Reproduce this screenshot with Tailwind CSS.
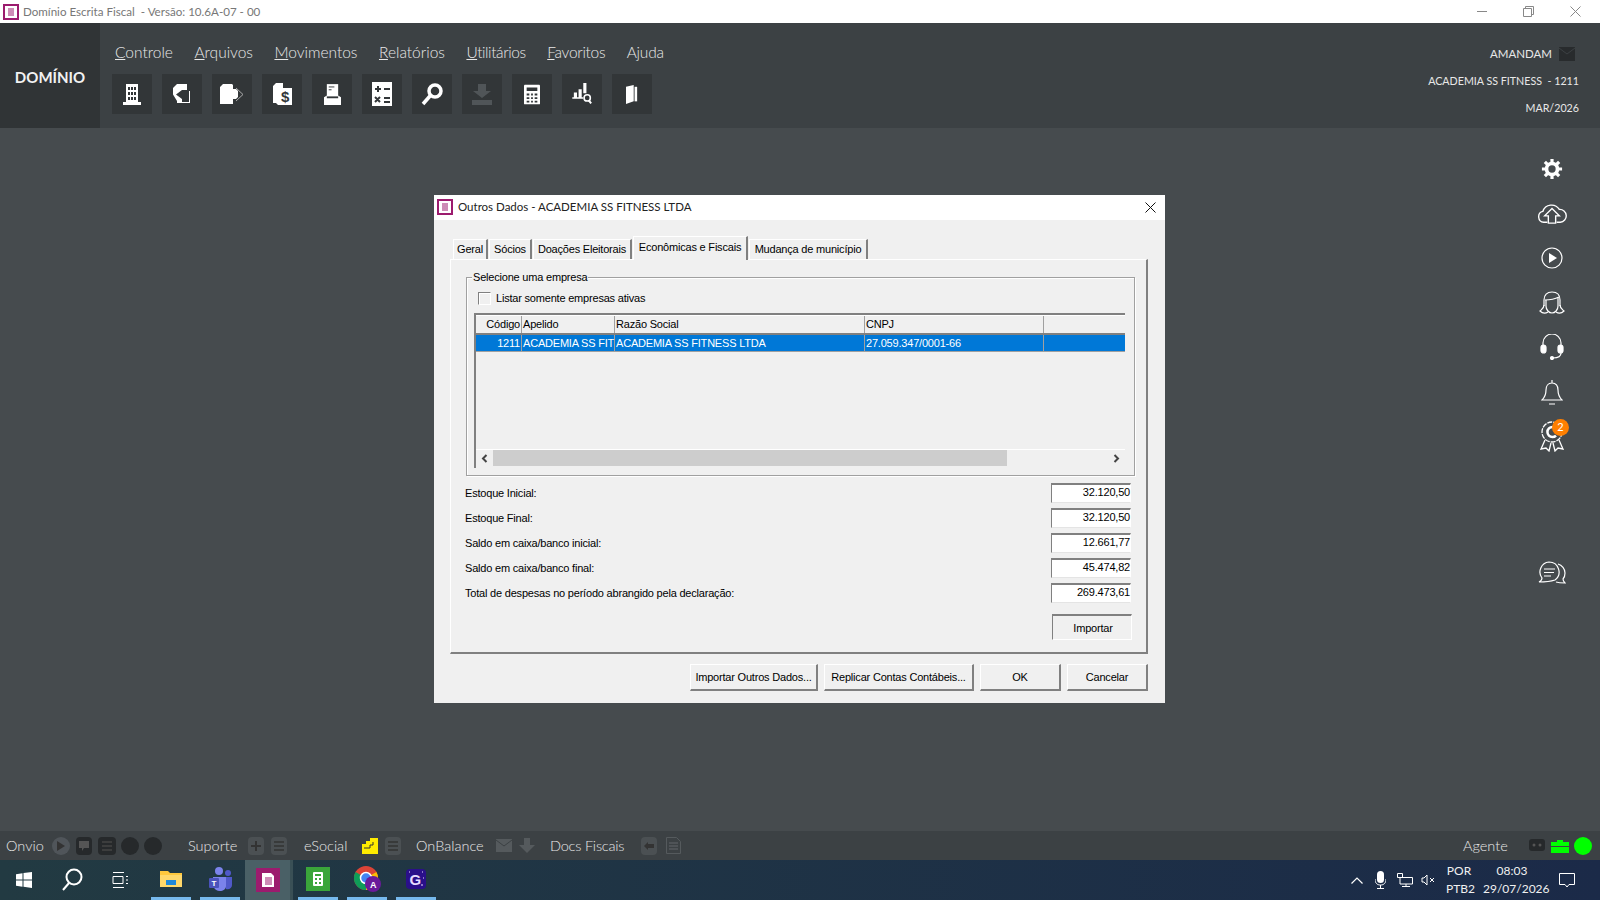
<!DOCTYPE html>
<html lang="pt-BR">
<head>
  <meta charset="UTF-8" />
  <title>Domínio Escrita Fiscal</title>
  <script src="https://cdn.jsdelivr.net/npm/@tailwindcss/browser@4"></script>
</head>
<body class="w-[1600px] h-[900px] overflow-hidden flex flex-col bg-[#464b4e] font-['Lato','Liberation_Sans',sans-serif]">

  <!-- barra de titulo -->
  <div class="h-[23px] bg-white flex items-center shrink-0 pl-[3px]">
    <svg width="16" height="16" viewBox="0 0 16 16"><rect x="1" y="1" width="14" height="14" fill="#fff" stroke="#9c1b6e" stroke-width="2"/><path d="M5 5h6M5 7h6M5 9h6M5 11h6" stroke="#9c1b6e"/></svg>
    <span class="ml-[4px] text-[11.6px] text-[#777]">Domínio Escrita Fiscal&nbsp; - Versão: 10.6A-07 - 00</span>
    <div class="ml-auto flex items-center text-[#777]">
      <svg class="mr-[35px]" width="11" height="11" viewBox="0 0 11 11"><path d="M0 5.500h10" stroke="#888"/></svg>
      <svg class="mr-[36px]" width="11" height="11" viewBox="0 0 11 11" fill="none" stroke="#888"><path d="M.5 2.500h8v8h-8zM2.500 2.500v-2h8v8h-2"/></svg>
      <svg class="mr-[19px]" width="11" height="11" viewBox="0 0 11 11"><path d="M.5.500l10 10M10.500.500l-10 10" stroke="#888"/></svg>
    </div>
  </div>

  <!-- cabecalho -->
  <header class="h-[105px] bg-[#3c4144] flex shrink-0 text-white">
    <div class="w-[100px] bg-[#303436] flex items-center justify-center pt-[3px]">
      <span class="text-[15px] font-bold text-[#f2f2f2]">DOMÍNIO</span>
    </div>
    <div class="pl-[12px] pt-[16px]">
      <nav class="h-[28px] flex items-center gap-[21.5px] pl-[3px] text-[15.5px] text-[#e8e8e8] font-light whitespace-nowrap">
        <span><u>C</u>ontrole</span><span><u>A</u>rquivos</span><span><u>M</u>ovimentos</span><span><u>R</u>elatórios</span><span class="tracking-[-0.4px]"><u>U</u>tilitários</span><span class="tracking-[-0.3px]"><u>F</u>avoritos</span><span class="tracking-[-0.2px]">Ajuda</span>
      </nav>
      <div class="mt-[7px] flex gap-[10px]">
        <div class="w-[40px] h-[40px] bg-[#323638] flex items-center justify-center"><svg width="18" height="21" viewBox="0 0 18 21" fill="#fff"><path d="M3 0h12v18h3v3H0v-3h3z"/><path d="M5 3h2v3H5zM8 3h2v3H8zM11 3h2v3h-2zM5 8h2v3H5zM8 8h2v3H8zM11 8h2v3h-2zM5 13h2v3H5zM8 13h2v3H8zM11 13h2v3h-2z" fill="#323638"/></svg></div>
        <div class="w-[40px] h-[40px] bg-[#323638] flex items-center justify-center"><svg width="18" height="21" viewBox="0 0 18 21" fill="#fff"><path d="M4 0h10v6h-5L3 10.500 9 15v3h8v1H4v-2L0 10.500V4z"/><path d="M16.500 7v12" stroke="#fff"/></svg></div>
        <div class="w-[40px] h-[40px] bg-[#323638] flex items-center justify-center"><svg width="24" height="21" viewBox="0 0 24 21" fill="#fff"><path d="M3 0h9l1 1v4h3l2 2v6l-2 2h-3v5H0V3z"/><path d="M16 4l7 6.500-7 6.500" fill="none" stroke="#aaa"/></svg></div>
        <div class="w-[40px] h-[40px] bg-[#323638] flex items-center justify-center"><svg width="20" height="22" viewBox="0 0 20 22" fill="#fff"><path d="M4 0h7v5h9v17H6l-2-2H1V3z"/><text x="9" y="19" font-size="15" font-weight="700" fill="#323638" font-family="Liberation Sans, sans-serif">$</text></svg></div>
        <div class="w-[40px] h-[40px] bg-[#323638] flex items-center justify-center"><svg width="17" height="21" viewBox="0 0 18 22" fill="#fff"><path d="M3 0h12v13H3z"/><path d="M5 3h6M5 6h3" stroke="#323638"/><path d="M0 14l3-2v3h12v-3l3 2v8H0z"/></svg></div>
        <div class="w-[40px] h-[40px] bg-[#323638] flex items-center justify-center"><svg width="20" height="24" viewBox="0 0 20 24" fill="#fff"><rect width="20" height="24"/><path d="M3 7h6M6 4v6M12 7h6M3 15l5 5M8 15l-5 5M12 16h6M12 20h6" stroke="#323638" stroke-width="2"/></svg></div>
        <div class="w-[40px] h-[40px] bg-[#323638] flex items-center justify-center"><svg width="22" height="24" viewBox="0 0 22 24" fill="none" stroke="#fff"><circle cx="14" cy="9" r="6" stroke-width="3.500"/><path d="M9 14l-7 8" stroke-width="3.500"/></svg></div>
        <div class="w-[40px] h-[40px] bg-[#323638] flex items-center justify-center"><svg width="20" height="21" viewBox="0 0 20 21" fill="#505558"><path d="M6 0h8v7h5l-9 7-9-7h5z"/><path d="M0 16h20v5H0z"/></svg></div>
        <div class="w-[40px] h-[40px] bg-[#323638] flex items-center justify-center"><svg width="16" height="21" viewBox="0 0 18 22" fill="#fff"><rect width="18" height="22" rx="1"/><path d="M3 3h12v4H3zM3 10h3v2H3zM8 10h2v2H8zM12 10h3v2h-3zM3 14h3v2H3zM8 14h2v2H8zM12 14h3v2h-3zM3 18h3v2H3zM8 18h2v2H8zM12 18h3v2h-3z" fill="#323638"/></svg></div>
        <div class="w-[40px] h-[40px] bg-[#323638] flex items-center justify-center"><svg width="21" height="22" viewBox="0 0 26 28" fill="#fff"><path d="M2 12h4v6H2zM8 8h4v10H8zM14 0h4v13h-4zM0 18h14v2H0z"/><circle cx="19" cy="19" r="4" fill="none" stroke="#fff" stroke-width="2"/><path d="M21 22l3 4" stroke="#fff" stroke-width="2.500"/></svg></div>
        <div class="w-[40px] h-[40px] bg-[#323638] flex items-center justify-center"><svg width="12" height="21" viewBox="0 0 14 22" fill="#fff"><path d="M0 2l9-2v19l-9 3z"/><path d="M10 2h3v17h-3z"/></svg></div>
      </div>
    </div>
    <div class="ml-auto pr-[21px] pt-[17px] text-[10.7px] text-[#e8e8e8] text-right leading-[27px] font-normal whitespace-nowrap">
      <div class="flex justify-end items-center h-[27px] mr-[4px] text-[11.5px]">AMANDAM<svg class="ml-[7px]" width="16" height="14" viewBox="0 0 16 14"><rect width="16" height="14" fill="#282b2d"/><path d="M0 1l8 6 8-6" fill="none" stroke="#3c4144"/></svg></div>
      <div>ACADEMIA SS FITNESS&nbsp; - 1211</div>
      <div>MAR/2026</div>
    </div>
  </header>

  <!-- area de trabalho -->
  <main class="flex-1 flex justify-between min-h-0">
    <div class="pl-[434px] pt-[67px]">

      <!-- janela Outros Dados -->
      <section class="w-[731px] h-[508px] bg-[#f0f0f0] text-black text-[11px] tracking-[-0.2px] font-['Liberation_Sans',sans-serif]">
        <div class="h-[25px] bg-white flex items-center pl-[3px] pr-[9px] pb-[1px] tracking-normal font-['Lato',sans-serif] text-[11.5px] text-[#222]">
          <svg width="16" height="16" viewBox="0 0 16 16"><rect x="1" y="1" width="14" height="14" fill="#fff" stroke="#9c1b6e" stroke-width="2"/><path d="M5 5h6M5 7h6M5 9h6M5 11h6" stroke="#9c1b6e"/></svg>
          <span class="ml-[5px]">Outros Dados - ACADEMIA SS FITNESS LTDA</span>
          <svg class="ml-auto" width="11" height="11" viewBox="0 0 11 11"><path d="M.5.500l10 10M10.500.500l-10 10" stroke="#111"/></svg>
        </div>

        <div class="pl-[16px] pr-[17px] pt-[16px]">
          <!-- abas -->
          <div class="h-[24px] flex items-end gap-[1px] pl-[3px] relative z-10 -mb-[1px]">
            <div class="w-[35px] h-[20px] mb-[1px] flex items-center justify-center bg-[#f0f0f0] border-t border-l border-white border-r-2 border-r-[#808080]">Geral</div>
            <div class="w-[43px] h-[20px] mb-[1px] flex items-center justify-center bg-[#f0f0f0] border-t border-l border-white border-r-2 border-r-[#808080]">Sócios</div>
            <div class="w-[99px] h-[20px] mb-[1px] flex items-center justify-center bg-[#f0f0f0] border-t border-l border-white border-r-2 border-r-[#808080]">Doações Eleitorais</div>
            <div class="w-[115px] h-[24px] pb-[3px] flex items-center justify-center bg-[#f0f0f0] border-t border-l border-white border-r-2 border-r-[#808080]">Econômicas e Fiscais</div>
            <div class="w-[119px] h-[20px] mb-[1px] flex items-center justify-center bg-[#f0f0f0] border-t border-l border-white border-r-2 border-r-[#808080]">Mudança de município</div>
          </div>

          <!-- painel da aba -->
          <div class="h-[395px] border-t border-l border-white border-r-2 border-b-2 border-r-[#808080] border-b-[#808080] pt-[17px] pl-[15px] pr-[11px]">
            <fieldset class="relative h-[199px] border border-[#a0a0a0] shadow-[inset_1px_1px_0_#fff,1px_1px_0_#fff] pl-[7px] pr-[9px] pt-[14px]">
              <span class="absolute left-[5px] -top-[8px] px-[1px] bg-[#f0f0f0] leading-[14px]">Selecione uma empresa</span>
              <label class="flex items-center h-[13px] ml-[4px]">
                <span class="w-[13px] h-[13px] border border-[#808080] shadow-[inset_1px_1px_0_#fff] border-r-white border-b-white"></span>
                <span class="ml-[5px]">Listar somente empresas ativas</span>
              </label>

              <!-- grade -->
              <div class="mt-[8px] h-[155px] pb-[2px] border-t-2 border-l-2 border-[#808080] flex flex-col">
                <div class="h-[20px] flex border-b-2 border-[#808080] shrink-0 border-t border-t-white">
                  <div class="w-[46px] pr-[1px] text-right border-r border-[#a0a0a0]">Código</div>
                  <div class="w-[93px] pl-[1px] border-r border-[#a0a0a0]">Apelido</div>
                  <div class="w-[250px] pl-[1px] border-r border-[#a0a0a0]">Razão Social</div>
                  <div class="w-[179px] pl-[1px] border-r border-[#a0a0a0]">CNPJ</div>
                  <div class="flex-1"></div>
                </div>
                <div class="h-[17px] flex bg-[#0078d7] text-white shrink-0 leading-[17px] border-b border-[#a0a0a0]">
                  <div class="w-[46px] pr-[1px] text-right border-r border-[#a0a0a0]">1211</div>
                  <div class="w-[93px] pl-[1px] border-r border-[#a0a0a0] whitespace-nowrap">ACADEMIA SS FIT</div>
                  <div class="w-[250px] pl-[1px] border-r border-[#a0a0a0]">ACADEMIA SS FITNESS LTDA</div>
                  <div class="w-[179px] pl-[1px] border-r border-[#a0a0a0]">27.059.347/0001-66</div>
                  <div class="flex-1"></div>
                </div>
                <div class="flex-1"></div>
                <div class="h-[17px] flex items-center border-t border-white shrink-0">
                  <div class="w-[17px] flex justify-center"><svg width="7" height="9" viewBox="0 0 7 9"><path d="M5.500 1L2 4.500 5.500 8" fill="none" stroke="#444" stroke-width="2"/></svg></div>
                  <div class="w-[514px] h-[16px] bg-[#cdcdcd]"></div>
                  <div class="flex-1"></div>
                  <div class="w-[17px] flex justify-center"><svg width="7" height="9" viewBox="0 0 7 9"><path d="M1.500 1L5 4.500 1.500 8" fill="none" stroke="#444" stroke-width="2"/></svg></div>
                </div>
              </div>
            </fieldset>

            <!-- campos -->
            <div class="mt-[7px] -ml-[1px] pr-[4px]">
              <div class="h-[20px] mb-[5px] flex items-center justify-between"><span>Estoque Inicial:</span><span class="w-[80px] h-[20px] bg-white border-t-2 border-l border-[#808080] border-r border-b border-r-white border-b-[#e4e4e4] text-right leading-[14px]">32.120,50</span></div>
              <div class="h-[20px] mb-[5px] flex items-center justify-between"><span>Estoque Final:</span><span class="w-[80px] h-[20px] bg-white border-t-2 border-l border-[#808080] border-r border-b border-r-white border-b-[#e4e4e4] text-right leading-[14px]">32.120,50</span></div>
              <div class="h-[20px] mb-[5px] flex items-center justify-between"><span>Saldo em caixa/banco inicial:</span><span class="w-[80px] h-[20px] bg-white border-t-2 border-l border-[#808080] border-r border-b border-r-white border-b-[#e4e4e4] text-right leading-[14px]">12.661,77</span></div>
              <div class="h-[20px] mb-[5px] flex items-center justify-between"><span>Saldo em caixa/banco final:</span><span class="w-[80px] h-[20px] bg-white border-t-2 border-l border-[#808080] border-r border-b border-r-white border-b-[#e4e4e4] text-right leading-[14px]">45.474,82</span></div>
              <div class="h-[20px] flex items-center justify-between"><span>Total de despesas no período abrangido pela declaração:</span><span class="w-[80px] h-[20px] bg-white border-t-2 border-l border-[#808080] border-r border-b border-r-white border-b-[#e4e4e4] text-right leading-[14px]">269.473,61</span></div>
              <div class="flex justify-end mt-[11px] -mr-[1px]">
                <button class="w-[80px] h-[26px] pl-[2px] pt-[1px] border-t-2 border-l border-[#808080] border-r border-b border-r-white border-b-white">Importar</button>
              </div>
            </div>
          </div>

          <!-- botoes -->
          <div class="mt-[10px] flex justify-end gap-[6px]">
            <button class="w-[128px] h-[27px] border-t border-l border-white border-r-2 border-b-2 border-r-[#808080] border-b-[#808080]">Importar Outros Dados...</button>
            <button class="w-[150px] h-[27px] border-t border-l border-white border-r-2 border-b-2 border-r-[#808080] border-b-[#808080]">Replicar Contas Contábeis...</button>
            <button class="w-[81px] h-[27px] border-t border-l border-white border-r-2 border-b-2 border-r-[#808080] border-b-[#808080]">OK</button>
            <button class="w-[81px] h-[27px] border-t border-l border-white border-r-2 border-b-2 border-r-[#808080] border-b-[#808080]">Cancelar</button>
          </div>
        </div>
      </section>
    </div>

    <!-- icones da direita -->
    <aside class="w-[96px] pt-[19px] flex flex-col items-center text-white">
      <div class="h-[44.5px] flex items-center"><svg width="22" height="22" viewBox="0 0 24 24" fill="none" stroke="#fff"><circle cx="12" cy="12" r="6" stroke-width="4"/><path d="M12 1v4M12 19v4M1 12h4M19 12h4M4.200 4.200l2.800 2.800M17 17l2.800 2.800M4.200 19.800L7 17M17 7l2.800-2.800" stroke-width="3.500"/></svg></div>
      <div class="h-[44.5px] flex items-center"><svg width="30" height="22" viewBox="0 0 32 24" fill="none" stroke="#fff" stroke-width="1.500"><path d="M11 21H7a6 6 0 0 1-1-11.800A10 10 0 0 1 24 7a7 7 0 0 1 1 14h-4"/><path d="M12 22v-8H8l8-8 8 8h-4v8z"/></svg></div>
      <div class="h-[44.5px] flex items-center"><svg width="22" height="22" viewBox="0 0 22 22" fill="none" stroke="#fff" stroke-width="1.200"><circle cx="11" cy="11" r="10"/><path d="M8 6l8 5-8 5z" fill="#fff" stroke="none"/></svg></div>
      <div class="h-[44.5px] flex items-center"><svg width="26" height="24" viewBox="0 0 26 24" fill="none" stroke="#fff" stroke-width="1.200"><path d="M5 15V9c0-5 3-8 8-8s8 3 8 8v6"/><path d="M6 9c5 0 10-1 14-3"/><path d="M7 9v6c0 4 3 7 6 7s6-3 6-7V6"/><path d="M5 14c0 3-2 4-4 6 2 2 5 3 8 1M21 14c0 3 2 4 4 6-2 2-5 3-8 1"/></svg></div>
      <div class="h-[44.5px] flex items-center"><svg width="24" height="26" viewBox="0 0 24 26" fill="none" stroke="#fff" stroke-width="1.200"><path d="M3 12V9a9 9 0 0 1 18 0v3"/><rect x="1" y="11" width="5" height="8" rx="2.500" fill="#fff"/><rect x="18" y="11" width="5" height="8" rx="2.500" fill="#fff"/><path d="M21 19c0 3-3 5-8 5"/><circle cx="12" cy="24" r="1.500" fill="#fff"/></svg></div>
      <div class="h-[44.5px] flex items-center"><svg width="22" height="26" viewBox="0 0 22 26" fill="none" stroke="#fff" stroke-width="1.200"><path d="M11 1v3M11 4c-4 0-6 3-6 7 0 4-1 7-4 10h20c-3-3-4-6-4-10 0-4-2-7-6-7zM8 25h6"/></svg></div>
      <div class="h-[44.5px] flex items-center relative"><svg width="26" height="32" viewBox="0 0 26 32" fill="none" stroke="#fff" stroke-width="1.300"><circle cx="13" cy="12" r="10" stroke-dasharray="5 1"/><path d="M17 8.500a5 5 0 1 0 0 7" stroke-width="2.500"/><path d="M6 20l-4 9 5-1 3 3 2-8M20 20l4 9-5-1-3 3-2-8"/></svg>
        <span class="absolute left-[13px] top-[5px] w-[17px] h-[17px] rounded-full bg-[#ff7f00] text-[11px] tracking-normal text-white flex items-center justify-center">2</span></div>
      <div class="mt-[92px] h-[44.5px] flex items-center"><svg width="28" height="24" viewBox="0 0 28 24" fill="none" stroke="#fff" stroke-width="1.200"><path d="M11 1a10 10 0 0 1 6 18c-3 1-9 2-16 2 2-1 3-2 3-4A10 10 0 0 1 11 1z"/><path d="M20 3c4 1 7 5 7 9 0 3-1 5-2 6 0 2 1 3 2 4-3 0-6 0-9-1"/><path d="M6 8h11M6 11.500h10M6 15h7"/></svg></div>
    </aside>
  </main>

  <!-- barra inferior -->
  <div class="h-[29px] bg-[#3c4144] shrink-0 flex items-center text-[14.5px] text-[#e8e8e8] font-light pl-[6px] pr-[8px] whitespace-nowrap">
    <span class="w-[37px]">Onvio</span>
    <span class="ml-[9px] w-[18px] h-[18px] rounded-full bg-[#50555a] flex items-center justify-center"><svg width="8" height="10" viewBox="0 0 8 10"><path d="M0 0l8 5-8 5z" fill="#333"/></svg></span>
    <span class="ml-[6px] w-[16px] h-[18px] rounded bg-[#26292b] flex items-center justify-center"><svg width="10" height="10" viewBox="0 0 10 10"><path d="M0 0h10v7H5L3 10V7H0z" fill="#555"/></svg></span>
    <span class="ml-[6px] w-[18px] h-[18px] rounded bg-[#26292b] flex items-center justify-center"><svg width="10" height="10" viewBox="0 0 10 10"><path d="M0 1h10M0 5h10M0 9h10" stroke="#444" stroke-width="1.500"/></svg></span>
    <span class="ml-[5px] w-[18px] h-[18px] rounded-full bg-[#26292b]"></span>
    <span class="ml-[5px] w-[18px] h-[18px] rounded-full bg-[#26292b]"></span>
    <span class="ml-[26px] w-[47px]">Suporte</span>
    <span class="ml-[13px] w-[16px] h-[18px] rounded bg-[#4b5053] flex items-center justify-center"><svg width="10" height="10" viewBox="0 0 10 10"><path d="M5 0v10M0 5h10" stroke="#333" stroke-width="2"/></svg></span>
    <span class="ml-[7px] w-[16px] h-[18px] rounded bg-[#4b5053] flex items-center justify-center"><svg width="10" height="10" viewBox="0 0 10 10"><path d="M0 1h10M0 5h10M0 9h10" stroke="#333" stroke-width="1.500"/></svg></span>
    <span class="ml-[17px] w-[43px]">eSocial</span>
    <svg class="ml-[15px]" width="16" height="16" viewBox="0 0 16 16"><path d="M8 0h8v16H0V6h4V3h4z" fill="#ffeb00"/><path d="M2 10h6V7h3V4" fill="none" stroke="#333"/></svg>
    <span class="ml-[7px] w-[16px] h-[18px] rounded bg-[#4b5053] flex items-center justify-center"><svg width="10" height="10" viewBox="0 0 10 10"><path d="M0 1h10M0 5h10M0 9h10" stroke="#333" stroke-width="1.500"/></svg></span>
    <span class="ml-[15px] w-[67px]">OnBalance</span>
    <svg class="ml-[13px]" width="16" height="13" viewBox="0 0 16 13"><rect width="16" height="13" fill="#555a5d"/><path d="M0 1l8 6 8-6" fill="none" stroke="#3c4144"/></svg>
    <svg class="ml-[7px]" width="16" height="15" viewBox="0 0 16 15"><path d="M5 0h6v7h5l-8 8-8-8h5z" fill="#555a5d"/></svg>
    <span class="ml-[15px] w-[74px] tracking-[-0.2px]">Docs Fiscais</span>
    <span class="ml-[17px] w-[16px] h-[18px] rounded bg-[#4b5053] flex items-center justify-center"><svg width="10" height="8" viewBox="0 0 10 8"><path d="M4 0v2h6v4H4v2L0 4z" fill="#333"/></svg></span>
    <svg class="ml-[9px]" width="15" height="17" viewBox="0 0 15 17" fill="none" stroke="#555a5d"><path d="M.5.500h10l4 4v12H.5z"/><path d="M3 6h9M3 9h9M3 12h9" stroke-width="1.500"/></svg>
    <span class="ml-auto w-[44px]">Agente</span>
    <svg class="ml-[22px]" width="16" height="15" viewBox="0 0 16 15"><rect y="1" width="16" height="12" rx="3" fill="#26292b"/><circle cx="5" cy="7" r="1.500" fill="#555"/><circle cx="11" cy="7" r="1.500" fill="#555"/></svg>
    <svg class="ml-[6px]" width="18" height="15" viewBox="0 0 18 15"><path d="M6 2h6v2h6v4H0V4h6zM0 9h18v6H0z" fill="#00ff00"/></svg>
    <span class="ml-[5px] w-[18px] h-[18px] rounded-full bg-[#00ff00]"></span>
  </div>

  <!-- barra de tarefas -->
  <footer class="h-[40px] shrink-0 flex items-center text-white bg-gradient-to-r from-[#223a42] to-[#1b2a48] text-[12px] font-['Lato',sans-serif]">
    <svg class="ml-[16px]" width="16" height="16" viewBox="0 0 16 16" fill="#fff"><path d="M0 2.300l6.500-1V7.500H0zM7.500 1.100L16 0v7.500H7.500zM0 8.500h6.500v6.200l-6.500-1zM7.500 8.500H16V16l-8.500-1.200z"/></svg>
    <svg class="ml-[29px]" width="22" height="24" viewBox="0 0 22 24" fill="none" stroke="#fff" stroke-width="2"><circle cx="13" cy="9" r="7.500"/><path d="M8 15l-6 7"/></svg>
    <svg class="ml-[29px]" width="16" height="16" viewBox="0 0 16 16" fill="none" stroke="#fff"><path d="M1 .500h11M1 15.500h11M1 4.500h10v7H1zM14 4.500h2M14 8h2M14 11.500h2"/></svg>

    <div class="ml-[23px] w-[40px] h-[40px] flex items-center justify-center border-b-[3px] border-[#76b9ed]"><svg width="22" height="20" viewBox="0 0 22 20"><path d="M0 2h8l2 2h12v14H0z" fill="#ffc83d"/><path d="M0 6h22v12H0z" fill="#ffd86b"/><path d="M6 11h10v5H6z" fill="#1f88d9"/></svg></div>
    <div class="ml-[9px] w-[40px] h-[40px] flex items-center justify-center border-b-[3px] border-[#76b9ed]"><svg width="23" height="24" viewBox="0 0 23 24"><circle cx="10" cy="4" r="4" fill="#7b83eb"/><circle cx="19" cy="6" r="3" fill="#5059c9"/><path d="M14 10h9v8c0 3-3 5-6 4z" fill="#5059c9"/><path d="M4 10h13v9c0 3-3 5-6 5s-6-2-7-5z" fill="#7b83eb"/><rect y="11" width="10" height="10" rx="1" fill="#4b53bc"/><text x="2.500" y="19" font-size="8" font-weight="700" fill="#fff" font-family="Liberation Sans, sans-serif">T</text></svg></div>
    <div class="ml-[5px] w-[45px] h-[40px] flex items-center justify-center bg-[#4a6066]"><svg width="24" height="24" viewBox="0 0 24 24"><rect width="24" height="24" fill="#9c1b6e"/><path d="M6 5h9l3 3v11H6z" fill="#fff"/><path d="M9 10h7M9 12h7M9 14h7M9 16h7" stroke="#9c1b6e"/></svg></div>
    <div class="w-[3px] h-[40px] bg-[#3a5056]"></div>
    <div class="ml-[5px] w-[40px] h-[40px] flex items-center justify-center border-b-[3px] border-[#76b9ed]"><svg width="24" height="24" viewBox="0 0 24 24"><rect width="24" height="24" fill="#3aa53a"/><rect x="7" y="5" width="10" height="14" rx="1" fill="#fff"/><path d="M9 7h6v2H9zM9 11h2v2H9zM13 11h2v2h-2zM9 15h2v2H9zM13 15h2v2h-2z" fill="#3aa53a"/></svg></div>
    <div class="ml-[9px] w-[40px] h-[40px] flex items-center justify-center border-b-[3px] border-[#76b9ed]"><svg width="27" height="26" viewBox="0 0 27 26"><circle cx="12" cy="12" r="12" fill="#db4437"/><path d="M12 12L22.400 6A12 12 0 0 1 12 24z" fill="#fbbc05"/><path d="M12 12L12 24A12 12 0 0 1 1.600 6z" fill="#0f9d58"/><circle cx="12" cy="12" r="5.500" fill="#4285f4" stroke="#fff" stroke-width="1.500"/><circle cx="19" cy="18" r="8" fill="#6a1b9a"/><text x="16" y="21.500" font-size="9" font-weight="700" fill="#fff" font-family="Liberation Sans, sans-serif">A</text></svg></div>
    <div class="ml-[9px] w-[40px] h-[40px] flex items-center justify-center border-b-[3px] border-[#76b9ed]"><svg width="20" height="20" viewBox="0 0 20 20"><rect width="20" height="20" rx="4" fill="#2a0f8a"/><text x="3.500" y="15.500" font-size="15" font-weight="700" fill="#e8dcff" font-family="Liberation Sans, sans-serif">G</text><path d="M3 3h1M16 3h1M17 9h1M15 16h2" stroke="#e8dcff"/></svg></div>

    <div class="ml-auto flex items-center">
      <svg width="12" height="7" viewBox="0 0 12 7" fill="none" stroke="#fff" stroke-width="1.200"><path d="M.5 6.500L6 1l5.500 5.500"/></svg>
      <svg class="ml-[12px]" width="11" height="18" viewBox="0 0 11 18" fill="#fff"><rect x="2" width="7" height="12" rx="3.500"/><path d="M0 8c0 4 2 6 5.500 6S11 12 11 8M5.500 14v3M2 17.500h7" fill="none" stroke="#fff"/></svg>
      <svg class="ml-[11px]" width="16" height="14" viewBox="0 0 16 14" fill="none" stroke="#fff"><path d="M.5.500h5v4h-5zM3 4.500h12.500v6.500H3zM9 11v2.500M5 13.500h8"/></svg>
      <svg class="ml-[8px]" width="14" height="12" viewBox="0 0 14 12" fill="none" stroke="#fff"><path d="M1 4h2l3-3v10L3 8H1zM9 4l4 4M13 4l-4 4"/></svg>
      <div class="ml-[11px] w-[26px] text-center leading-[18px] text-[#f0f0f0]"><div>POR</div><div>PTB2</div></div>
      <div class="ml-[11px] w-[58px] text-center leading-[18px] text-[#f0f0f0]"><div>08:03</div><div>29/07/2026</div></div>
      <svg class="ml-[18px] mr-[25px]" width="16" height="16" viewBox="0 0 16 16" fill="none" stroke="#fff"><path d="M.5 1.500h15v11H10L8 15l-2-2.500H.5z"/></svg>
    </div>
  </footer>
</body>
</html>
